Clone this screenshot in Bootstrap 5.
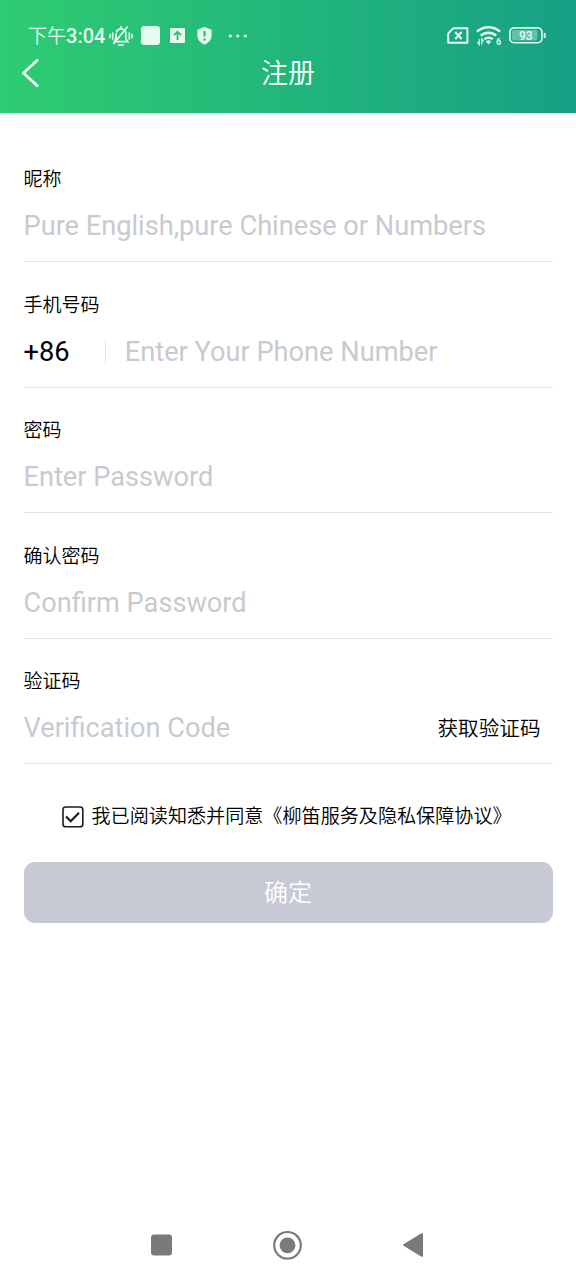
<!DOCTYPE html>
<html lang="zh-CN">
<head>
<meta charset="utf-8">
<meta name="viewport" content="width=device-width, initial-scale=1">
<title>注册</title>
<link href="https://cdn.jsdelivr.net/npm/bootstrap@5.3.0/dist/css/bootstrap.min.css" rel="stylesheet">
<style>
  body { font-family: Roboto, "Noto Sans CJK SC", sans-serif; color: #000; background: #fff; }
  .screen { height: 1280px; overflow: hidden; }
  .app-header { height: 112.5px; background: linear-gradient(90deg, #2ecc71, #16a085); color: #fff; }
  .status { height: 51px; padding: 20px 30px 0 28px; color: #e6fbf0; }
  .clock { font-size: 19px; line-height: 31px; width: 81px; padding-top: 2px; font-weight: 350; white-space: nowrap; }
  .clock span { font-size: 20px; font-weight: 500; }
  .titlebar { height: 44px; }
  .back { padding: 0 0 0 21px; line-height: 0; color: #fff; }
  .page-title { font-size: 27px; line-height: 44px; padding-top: 2px; font-weight: 350; }
  .form-area { padding: 24.4px 23.5px 0; }
  .field { height: 125.45px; padding-top: 29.5px; border-bottom: 1.3px solid #e2e3e6; }
  .field-label { font-size: 19px; line-height: 27px; display: block; font-weight: 350; }
  .field-row { height: 40px; margin-top: 13px; font-size: 27.2px; }
  .field-row .form-control { font-size: 27.2px; line-height: 40px; padding: 0; border: 0; border-radius: 0; box-shadow: none; background: none; min-width: 0; }
  .field-row .form-control::placeholder { color: #c8cad0; opacity: 1; }
  .prefix { width: 81px; line-height: 40px; }
  .divider { width: 1.3px; height: 24px; background: #e4e5e8; margin-right: 19px; }
  .code-link { font-size: 20.6px; color: #000; padding: 2px 12px 0 0; white-space: nowrap; font-weight: 350; }
  .agree { font-size: 19.1px; line-height: 28px; margin-top: 38px; padding-left: 38px; white-space: nowrap; font-weight: 350; }
  .agree span { padding-top: 1px; }
  .submit { height: 60.5px; margin-top: 31px; padding: 8px 0 6px; border: 0; border-radius: 11px; background: #c7c9d5; color: #fff; font-size: 24px; line-height: 36px; font-weight: 350; }
  .submit:hover { background: #c7c9d5; color: #fff; }
  .sysnav { height: 70px; padding: 0 152px 0 150px; }
</style>
</head>
<body>
<div class="screen d-flex flex-column">
  <header class="app-header flex-shrink-0">
    <div class="status d-flex align-items-center">
      <div class="clock">下午<span>3:04</span></div>
      <svg width="24" height="22" viewBox="0 0 24 22" fill="none" stroke="currentColor" stroke-width="1.8" stroke-linecap="round">
        <path d="M5.3 16.7h13.4l-1.9-3.1V9.2a4.9 4.9 0 0 0-9.3-2.4M7.1 9.2v4.4l-1.8 3.1M12 3V1.8M18.3 2 5 18.2"/>
        <path d="M9.7 20h4.6M3.7 8v6M1 9.5v3M20.3 8v6M23 9.5v3" stroke-width="1.7"/>
      </svg>
      <svg class="ms-2" width="19" height="19"><rect width="19" height="19" rx="3.3" fill="currentColor"/></svg>
      <svg style="margin-left:10px" width="15" height="15" viewBox="0 0 15 15"><rect width="15" height="15" rx="1" fill="currentColor"/><path d="M7.5 12V3.8M4 7.2l3.5-3.5L11 7.2" fill="none" stroke="#27bd78" stroke-width="1.8"/></svg>
      <svg style="margin-left:11.5px" width="15" height="18" viewBox="0 0 15 18"><path d="M7.5 0 14.6 2.8v5.400c0 4.300-2.900 7.800-7.100 9.400C3.300 16 .4 12.500.4 8.200V2.800z" fill="currentColor"/><path d="M7.500 4v5.600M7.500 11.300v2.200" stroke="#25ba7a" stroke-width="2.100"/></svg>
      <svg style="margin-left:16.5px" width="20" height="4" viewBox="0 0 20 4" fill="currentColor"><circle cx="2.300" cy="2" r="1.600"/><circle cx="9.800" cy="2" r="1.600"/><circle cx="17.300" cy="2" r="1.600"/></svg>
      <svg class="ms-auto" width="22" height="17" viewBox="0 0 22 17" fill="none" stroke="currentColor" stroke-width="1.900"><path d="M6.300 1.200H20.400V15.700H1.200V6.500z" stroke-linejoin="round"/><path d="m8.200 5 6.400 7M14.600 5l-6.400 7" stroke-width="2.100"/></svg>
      <svg style="margin-left:7px" width="26" height="21" viewBox="0 0 26 21" fill="none" stroke="currentColor" stroke-width="2.500">
        <path d="M1 6.700a17 17 0 0 1 23 0M4.700 10.700a11.500 11.500 0 0 1 15.600 0M8.400 14.300a6.300 6.300 0 0 1 8.200 0"/>
        <path d="M9.800 16.500a4 4 0 0 1 5.400 0l-2.700 3z" fill="currentColor" stroke="none"/>
        <path d="M3.200 14v5.500L1.200 17M5.800 19.500V14l2 2.500" stroke-width="1.200"/>
        <text x="20" y="20" font-family="Roboto" font-size="9" font-weight="700" fill="currentColor" stroke="none">6</text>
      </svg>
      <svg style="margin-left:7px" width="37" height="17" viewBox="0 0 37 17"><rect x=".9" y=".9" width="32" height="14.800" rx="4.200" fill="none" stroke="currentColor" stroke-width="1.600"/><rect x="3" y="3" width="25.500" height="10.600" rx="2" fill="#62c2aa"/><path d="M35.700 6v5" stroke="currentColor" stroke-width="1.800"/><text x="16.700" y="12.700" text-anchor="middle" font-family="Roboto" font-size="12" font-weight="500" fill="currentColor">93</text></svg>
    </div>
    <div class="titlebar position-relative d-flex align-items-center justify-content-center">
      <button type="button" class="btn back border-0 position-absolute start-0" aria-label="返回">
        <svg width="20" height="30" viewBox="0 0 20 30" fill="none" stroke="currentColor" stroke-width="2.600"><path d="M17 1.500 2.500 15 17 28.500"/></svg>
      </button>
      <h1 class="page-title m-0">注册</h1>
    </div>
  </header>

  <form class="form-area flex-grow-1">
    <div class="field">
      <label class="field-label" for="nick">昵称</label>
      <div class="field-row d-flex align-items-center"><input id="nick" class="form-control" placeholder="Pure English,pure Chinese or Numbers"></div>
    </div>
    <div class="field">
      <label class="field-label" for="phone">手机号码</label>
      <div class="field-row d-flex align-items-center">
        <span class="prefix flex-shrink-0">+86</span><span class="divider flex-shrink-0"></span>
        <input id="phone" class="form-control" placeholder="Enter Your Phone Number">
      </div>
    </div>
    <div class="field">
      <label class="field-label" for="pw">密码</label>
      <div class="field-row d-flex align-items-center"><input id="pw" type="password" class="form-control" placeholder="Enter Password"></div>
    </div>
    <div class="field">
      <label class="field-label" for="pw2">确认密码</label>
      <div class="field-row d-flex align-items-center"><input id="pw2" type="password" class="form-control" placeholder="Confirm Password"></div>
    </div>
    <div class="field">
      <label class="field-label" for="code">验证码</label>
      <div class="field-row d-flex align-items-center">
        <input id="code" class="form-control" placeholder="Verification Code">
        <a class="code-link text-decoration-none" href="#">获取验证码</a>
      </div>
    </div>
    <div class="agree d-flex align-items-center">
      <svg class="flex-shrink-0 me-2" width="22" height="22" viewBox="0 0 22 22" fill="none" stroke="#1d1d1f"><rect x="1" y="1" width="19.800" height="19.800" rx="2.600" stroke-width="1.600"/><path d="m4 10.500 4.700 4.700 8.300-8.500" stroke-width="2.200"/></svg>
      <span>我已阅读知悉并同意《柳笛服务及隐私保障协议》</span>
    </div>
    <button type="button" class="btn submit w-100">确定</button>
  </form>

  <nav class="sysnav d-flex align-items-center justify-content-between flex-shrink-0">
    <svg width="22" height="22"><rect x="1" y=".5" width="21" height="21" rx="3" fill="#7a7a7a"/></svg>
    <svg width="30" height="30"><circle cx="15.500" cy="15.300" r="13.300" fill="none" stroke="#7a7a7a" stroke-width="2.200"/><circle cx="15.500" cy="15.300" r="7.900" fill="#7a7a7a"/></svg>
    <svg width="22" height="26" viewBox="0 0 22 26"><path d="M20 2.200v21.600L2 13z" fill="#7a7a7a" stroke="#7a7a7a" stroke-width="2" stroke-linejoin="round"/></svg>
  </nav>
</div>
<script src="https://cdn.jsdelivr.net/npm/bootstrap@5.3.0/dist/js/bootstrap.bundle.min.js"></script>
</body>
</html>
